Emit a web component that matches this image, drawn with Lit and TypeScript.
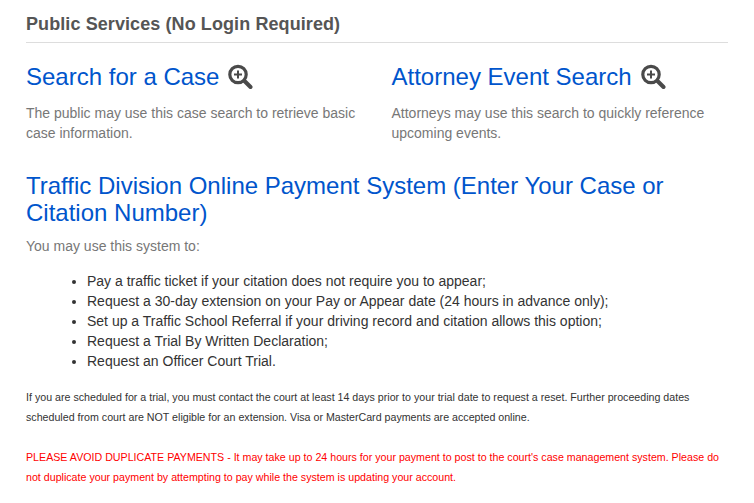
import { LitElement, html, css, svg } from "lit";
import { customElement } from "lit/decorators.js";

const icon = svg`<svg class="ic" viewBox="0 0 26 26" width="26" height="26">
<circle cx="11" cy="10.5" r="8.2" fill="none" stroke="#4a4a4a" stroke-width="3.2"/>
<path d="M7 10.5h8M11 6.5v8" stroke="#4a4a4a" stroke-width="2" fill="none"/>
<path d="M17.5 17l6 6" stroke="#4a4a4a" stroke-width="4" stroke-linecap="round" fill="none"/>
</svg>`;

@customElement("app-root")
export class AppRoot extends LitElement {
  static styles = css`
    :host { display: block; font-family: "Liberation Sans", Arial, sans-serif; background: #fff; color: #333; }
    .page { padding: 13px 26px 0; width: 702px; }
    .title { font-size: 18px; font-weight: 700; color: #555; line-height: 23px; margin: 0; padding-bottom: 6px; border-bottom: 1px solid #ddd; letter-spacing: 0.09px; }
    .cols { display: grid; grid-template-columns: 365.5px 1fr; margin-top: 20px; }
    h2 { margin: 0; font-weight: 400; font-size: 24px; line-height: 27px; color: #0055cc; }
    .head { display: flex; align-items: center; gap: 8px; }
    .ic { display: block; flex: none; }
    .desc { font-size: 14px; line-height: 20px; color: #777; margin: 13px 0 0; }
    .traffic { margin-top: 29px; }
    .use { font-size: 14px; line-height: 20px; color: #777; margin: 10px 0 0; }
    ul { margin: 15px 0 0; padding: 0 0 0 61px; font-size: 14px; line-height: 20px; color: #333; }
    .small { font-size: 10.667px; line-height: 20px; margin: 16px 0 0; color: #333; }
    .red { color: #f00; margin-top: 20px; }
  `;
  render() {
    return html`<div class="page">
      <h1 class="title">Public Services (No Login Required)</h1>
      <div class="cols">
        <div>
          <div class="head"><h2>Search for a Case</h2>${icon}</div>
          <p class="desc">The public may use this case search to retrieve basic<br />case information.</p>
        </div>
        <div>
          <div class="head"><h2>Attorney Event Search</h2>${icon}</div>
          <p class="desc">Attorneys may use this search to quickly reference<br />upcoming events.</p>
        </div>
      </div>
      <h2 class="traffic">Traffic Division Online Payment System (Enter Your Case or<br />Citation Number)</h2>
      <p class="use">You may use this system to:</p>
      <ul>
        <li>Pay a traffic ticket if your citation does not require you to appear;</li>
        <li>Request a 30-day extension on your Pay or Appear date (24 hours in advance only);</li>
        <li>Set up a Traffic School Referral if your driving record and citation allows this option;</li>
        <li>Request a Trial By Written Declaration;</li>
        <li>Request an Officer Court Trial.</li>
      </ul>
      <p class="small">If you are scheduled for a trial, you must contact the court at least 14 days prior to your trial date to request a reset. Further proceeding dates<br />scheduled from court are NOT eligible for an extension. Visa or MasterCard payments are accepted online.</p>
      <p class="small red">PLEASE AVOID DUPLICATE PAYMENTS - It may take up to 24 hours for your payment to post to the court's case management system. Please do<br />not duplicate your payment by attempting to pay while the system is updating your account.</p>
    </div>`;
  }
}
